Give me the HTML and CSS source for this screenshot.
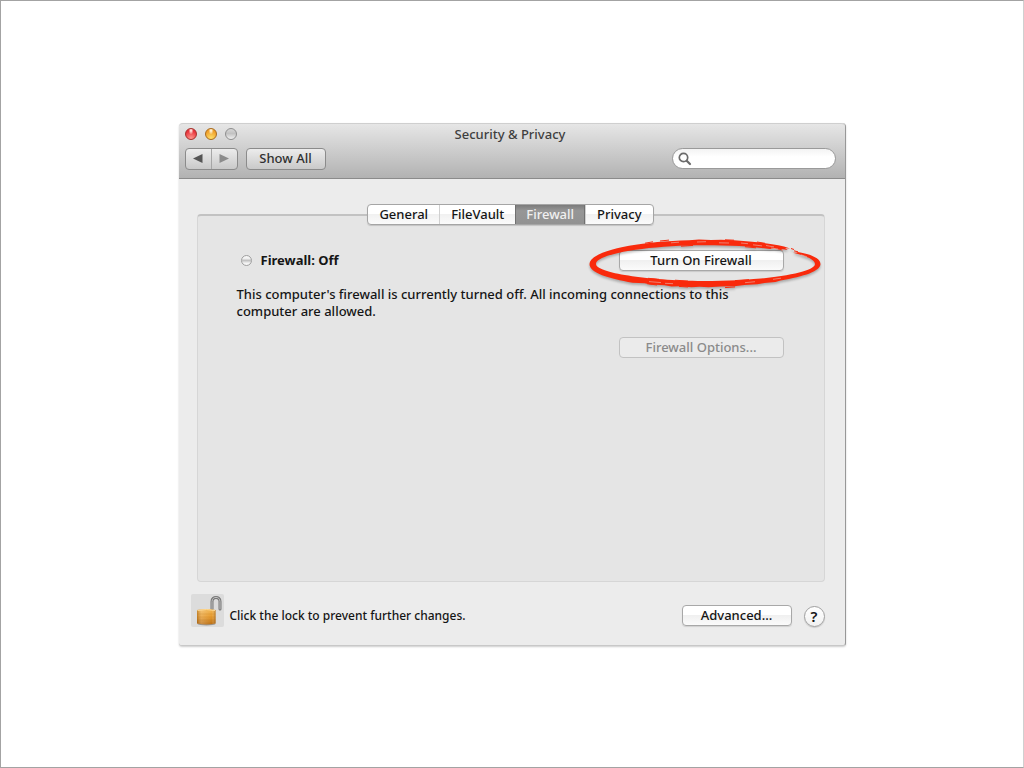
FILE: index.html
```html
<!DOCTYPE html>
<html lang="en">
<head>
<meta charset="utf-8">
<meta name="viewport" content="width=device-width, initial-scale=1">
<title>Security &amp; Privacy</title>
<link rel="stylesheet" href="styles.css">
</head>
<body>
<main class="window">
  <header class="titlebar">
    <div class="title-row">
      <div class="lights">
        <button class="light light-close" aria-label="Close"></button>
        <button class="light light-minimize" aria-label="Minimize"></button>
        <button class="light light-zoom" aria-label="Zoom"></button>
      </div>
      <h1 class="title">Security &amp; Privacy</h1>
    </div>
    <div class="tool-row">
      <div class="nav">
        <button class="nav-button" aria-label="Back"><svg width="10" height="9" viewBox="0 0 10 9"><path d="M0 4.500L9.500 0v9z" fill="#555"/></svg></button>
        <button class="nav-button" aria-label="Forward"><svg width="10" height="9" viewBox="0 0 10 9"><path d="M10 4.500L.5 0v9z" fill="#8c8c8c"/></svg></button>
      </div>
      <button class="show-all">Show All</button>
      <label class="search">
        <svg width="14" height="14" viewBox="0 0 14 14" fill="none" stroke="#6b6b6b"><circle cx="5.500" cy="5.500" r="4.200" stroke-width="1.700"/><path d="M8.700 8.700l3.300 3.300" stroke-width="2.200" stroke-linecap="round"/></svg>
        <input class="search-input" type="search" aria-label="Search">
      </label>
    </div>
  </header>
  <div class="content">
    <nav class="tabs">
      <button class="tab">General</button>
      <button class="tab">FileVault</button>
      <button class="tab tab-active">Firewall</button>
      <button class="tab">Privacy</button>
    </nav>
    <section class="panel">
      <div class="status-row">
        <span class="status-dot"></span>
        <h2 class="status">Firewall: Off</h2>
        <div class="highlighted">
          <button class="button button-wide">Turn On Firewall</button>
          <svg class="ring" width="240" height="58" viewBox="0 0 240 58">
            <path fill="#f92a0c" d="M4.500 28C4.500 15 52 5.500 104 4.200l10-.6 12 .4 10-.3C162 4.500 184 7 199 10.500l6 2-5-.3 3 1.800-7-.9 2 1.500-9-2.200-4 .6C167 10.300 146 9.200 120 9.200 62 9.200 11 18 11 28c0 9 51 16.300 107 17 62 0 112-8 112-17 0-4-8-8-22-11.200l5-.3-4-1.300C227 18 235.500 22.500 235.500 28c0 7-16 12.500-40 16.500l-5 1.500-11 1-7 1.300-13 .7-10 1.200-14 .2-12 .8-9-.5-8 .6-11-1-9 .1-7-1.200-14-.6-6-1.400-12-.5C24 42.500 4.500 37 4.500 28z"/>
            <g fill="none" stroke="#f92a0c" stroke-width="1">
              <path d="M60 7.200l8-1.400M75 5l9-.9M96 10.200l12-.8M140 3.800l9 .4M160 10.700l11 1.100M172 6l8 1.300M206 12.500l3 1M209 14.800l4 1M63 42.300l11 1M90 44.200l13 .9M150 44.600l14-1M62 47.700l10 1.300M94 50.400l9 .6M140 51.600l10-.7"/>
            </g>
            <g fill="none" stroke="#e7b8b0" stroke-width=".6">
              <path d="M86 6.800l8-.6M112 6l9-.3M134 6.800l10 .2M156 7l7 .7M168 8.800l9 1.100M181 9.500l8 1.400M186 12l7 1M216 18.800l6 2M64 45.600l12 1M80 47.300l8 .4M160 46.700l10-1M188 43.300l8-1.100"/>
            </g>
          </svg>
        </div>
      </div>
      <p class="description">This computer's firewall is currently turned off. All incoming connections to this computer are allowed.</p>
      <div class="options-row"><button class="button button-wide" disabled>Firewall Options...</button></div>
    </section>
    <footer class="footer">
      <button class="lock" aria-label="Lock">
        <svg width="33" height="33" viewBox="0 0 33 33">
          <defs>
            <linearGradient id="brass" x2="0" y2="1"><stop offset="0" stop-color="#f1b552"/><stop offset=".5" stop-color="#e79b2d"/><stop offset="1" stop-color="#b96d13"/></linearGradient>
            <linearGradient id="shade"><stop offset="0" stop-color="#804400" stop-opacity=".4"/><stop offset=".25" stop-color="#fff" stop-opacity=".2"/><stop offset=".8" stop-color="#fff" stop-opacity="0"/><stop offset="1" stop-color="#804400" stop-opacity=".5"/></linearGradient>
          </defs>
          <path d="M21 15V7.500c0-5.500 8-5.500 8 0V15" fill="none" stroke="#777" stroke-width="3" stroke-linecap="round"/>
          <path d="M21 15V7.500c0-5.500 8-5.500 8 0V15" fill="none" stroke="#c4c4c4" stroke-width="1" stroke-linecap="round"/>
          <ellipse cx="15.500" cy="30" rx="9" ry="1.500" fill="#999"/>
          <path d="M6 16q9-2 18.500 0V29.500q-9 2-18.500 0z" fill="url(#brass)"/>
          <path d="M6 16q9-2 18.500 0V29.500q-9 2-18.500 0z" fill="url(#shade)"/>
          <path d="M6.500 16.500q9-2 17.500 0" fill="none" stroke="#ffd890"/>
          <path d="M6 20h18.500M6 23h18.500M6 26h18.500" stroke="#b87018" stroke-width=".2"/>
        </svg>
      </button>
      <p class="lock-text">Click the lock to prevent further changes.</p>
      <button class="button button-advanced">Advanced...</button>
      <button class="help" aria-label="Help">?</button>
    </footer>
  </div>
</main>
</body>
</html>
```
FILE: styles.css
```css
* { box-sizing: border-box; }

body {
  margin: 0;
  min-height: 100vh;
  display: flex;
  align-items: center;
  justify-content: center;
  background: #fff;
  border: 1px solid #a3a3a3;
  border-right-color: #d0d0d0;
  font-family: "Noto Sans", "Open Sans", sans-serif;
  font-size: 13px;
  font-weight: 500;
  line-height: 17px;
  color: #151515;
}

button { font: inherit; color: inherit; padding: 0; margin: 0; }
h1, h2, p { margin: 0; font-size: inherit; }

.window {
  width: 100%;
  max-width: 667px;
  background: #ececec;
  border-radius: 4px 4px 3px 3px;
  border-right: 1px solid #989898;
  border-bottom: 1px solid #c8c8c8;
  box-shadow: 0 1px 2px rgba(0, 0, 0, .2);
}

.titlebar {
  padding: 2px 9px 8px 6px;
  background: linear-gradient(#e6e6e6, #b2b2b2);
  border-top: 1px solid #cfcfcf;
  border-bottom: 1px solid #8b8b8b;
  border-radius: 4px 4px 0 0;
}

.title-row {
  display: grid;
  grid-template-columns: 1fr auto 1fr;
  align-items: center;
  height: 16px;
}
.lights { display: flex; gap: 8px; }
.light {
  width: 12px;
  height: 12px;
  border-radius: 50%;
  border: 1px solid #8e8e8e;
  background: linear-gradient(#d6d6d6, #c2c2c2 45%, #f0f0f0);
}
.light-close {
  border-color: #a5302b;
  background: radial-gradient(ellipse at 50% 15%, #ffdcd8 0 8%, transparent 34%), radial-gradient(circle at 50% 95%, #ff9a90, #e8343c 70%);
}
.light-minimize {
  border-color: #a86a1d;
  background: radial-gradient(ellipse at 50% 15%, #fff0d0 0 8%, transparent 34%), radial-gradient(circle at 50% 95%, #ffe26c, #f0a02a 70%);
}
.title { font-weight: 500; color: #3f3f3f; }

.tool-row { display: flex; align-items: center; margin-top: 6px; }
.nav {
  display: flex;
  height: 22px;
  width: 53px;
  border: 1px solid #8b8b8b;
  border-radius: 4px;
  background: linear-gradient(#ececec, #c9c9c9);
}
.nav-button {
  flex: 1;
  display: grid;
  place-items: center;
  border: 0;
  background: none;
}
.nav-button + .nav-button { border-left: 1px solid #a6a6a6; }
.show-all {
  width: 80px;
  height: 22px;
  margin-left: 8px;
  border: 1px solid #8b8b8b;
  border-radius: 4px;
  background: linear-gradient(#ececec, #c9c9c9);
  color: #303030;
}
.search {
  display: flex;
  align-items: center;
  gap: 4px;
  width: 164px;
  height: 21px;
  margin-left: auto;
  padding: 0 8px 0 5px;
  border: 1px solid #9a9a9a;
  border-radius: 11px;
  background: linear-gradient(#f3f3f3, #fff 40%);
}
.search-input {
  flex: 1;
  min-width: 0;
  border: 0;
  outline: 0;
  background: none;
  font: inherit;
}

.content { padding: 25px 20px 18px 18px; }

.tabs {
  position: relative;
  display: flex;
  width: fit-content;
  height: 21px;
  margin: 0 auto -11px;
  border: 1px solid #a5a5a5;
  border-radius: 4px;
  background: linear-gradient(#fff 45%, #f1f1f1 50%, #fbfbfb);
  box-shadow: 0 1px 1px rgba(0, 0, 0, .15);
}
.tab {
  padding: 0 11px;
  border: 0;
  border-left: 1px solid #d0d0d0;
  background: none;
  line-height: 17px;
}
.tab:first-child { border-left: 0; }
.tab-active {
  border-left: 0;
  background: linear-gradient(#7b7b7b, #969696 30%, #929292);
  box-shadow: inset 1px 0 #707070, inset -1px 0 #707070;
  color: #f0f0f0;
}

.panel {
  min-height: 368px;
  padding: 34px 40px 20px 39px;
  border: 1px solid #d6d6d6;
  border-top: 2px solid #c2c2c2;
  border-radius: 4px;
  background: #e5e5e5;
}
.status-row { display: flex; align-items: center; }
.status-dot {
  width: 11px;
  height: 11px;
  margin: 0 9px 0 4px;
  border: 1px solid #a0a0a0;
  border-radius: 50%;
  background: linear-gradient(#f4f4f4 25%, #c2c2c2 50%, #f4f4f4 80%);
}
.status { font-weight: 700; }
.highlighted { position: relative; margin-left: auto; }
.ring {
  position: absolute;
  left: -34px;
  top: -14px;
  pointer-events: none;
  filter: drop-shadow(0 2px 1px rgba(0, 0, 0, .25));
}

.button {
  height: 21px;
  line-height: 18px;
  border: 1px solid #a8a8a8;
  border-radius: 4px;
  background: linear-gradient(#fff 45%, #f0f0f0 50%, #fbfbfb);
  box-shadow: 0 1px 1px rgba(0, 0, 0, .12);
}
.button:disabled {
  border-color: #c2c2c2;
  background: #ebebeb;
  box-shadow: none;
  color: #8a8a8a;
}
.button-wide { width: 165px; display: block; }
.description { max-width: 520px; margin-top: 15px; }
.options-row { display: flex; justify-content: flex-end; margin-top: 17px; }

.footer {
  display: flex;
  align-items: center;
  margin: 12px 0 0 -6px;
}
.lock {
  width: 33px;
  height: 33px;
  border: 0;
  border-radius: 2px;
  background: #dcdcdc;
}
.lock svg { display: block; }
.lock-text { margin: 10px auto 0 6px; font-size: 12px; }
.button-advanced { width: 110px; margin-top: 10px; }
.help {
  width: 21px;
  height: 21px;
  margin: 12px 0 0 12px;
  border: 1px solid #a0a0a0;
  border-radius: 50%;
  background: linear-gradient(#fff, #f1f1f1);
  box-shadow: 0 1px 1px rgba(0, 0, 0, .15);
  font-size: 15px;
  font-weight: 600;
  line-height: 19px;
}
```
